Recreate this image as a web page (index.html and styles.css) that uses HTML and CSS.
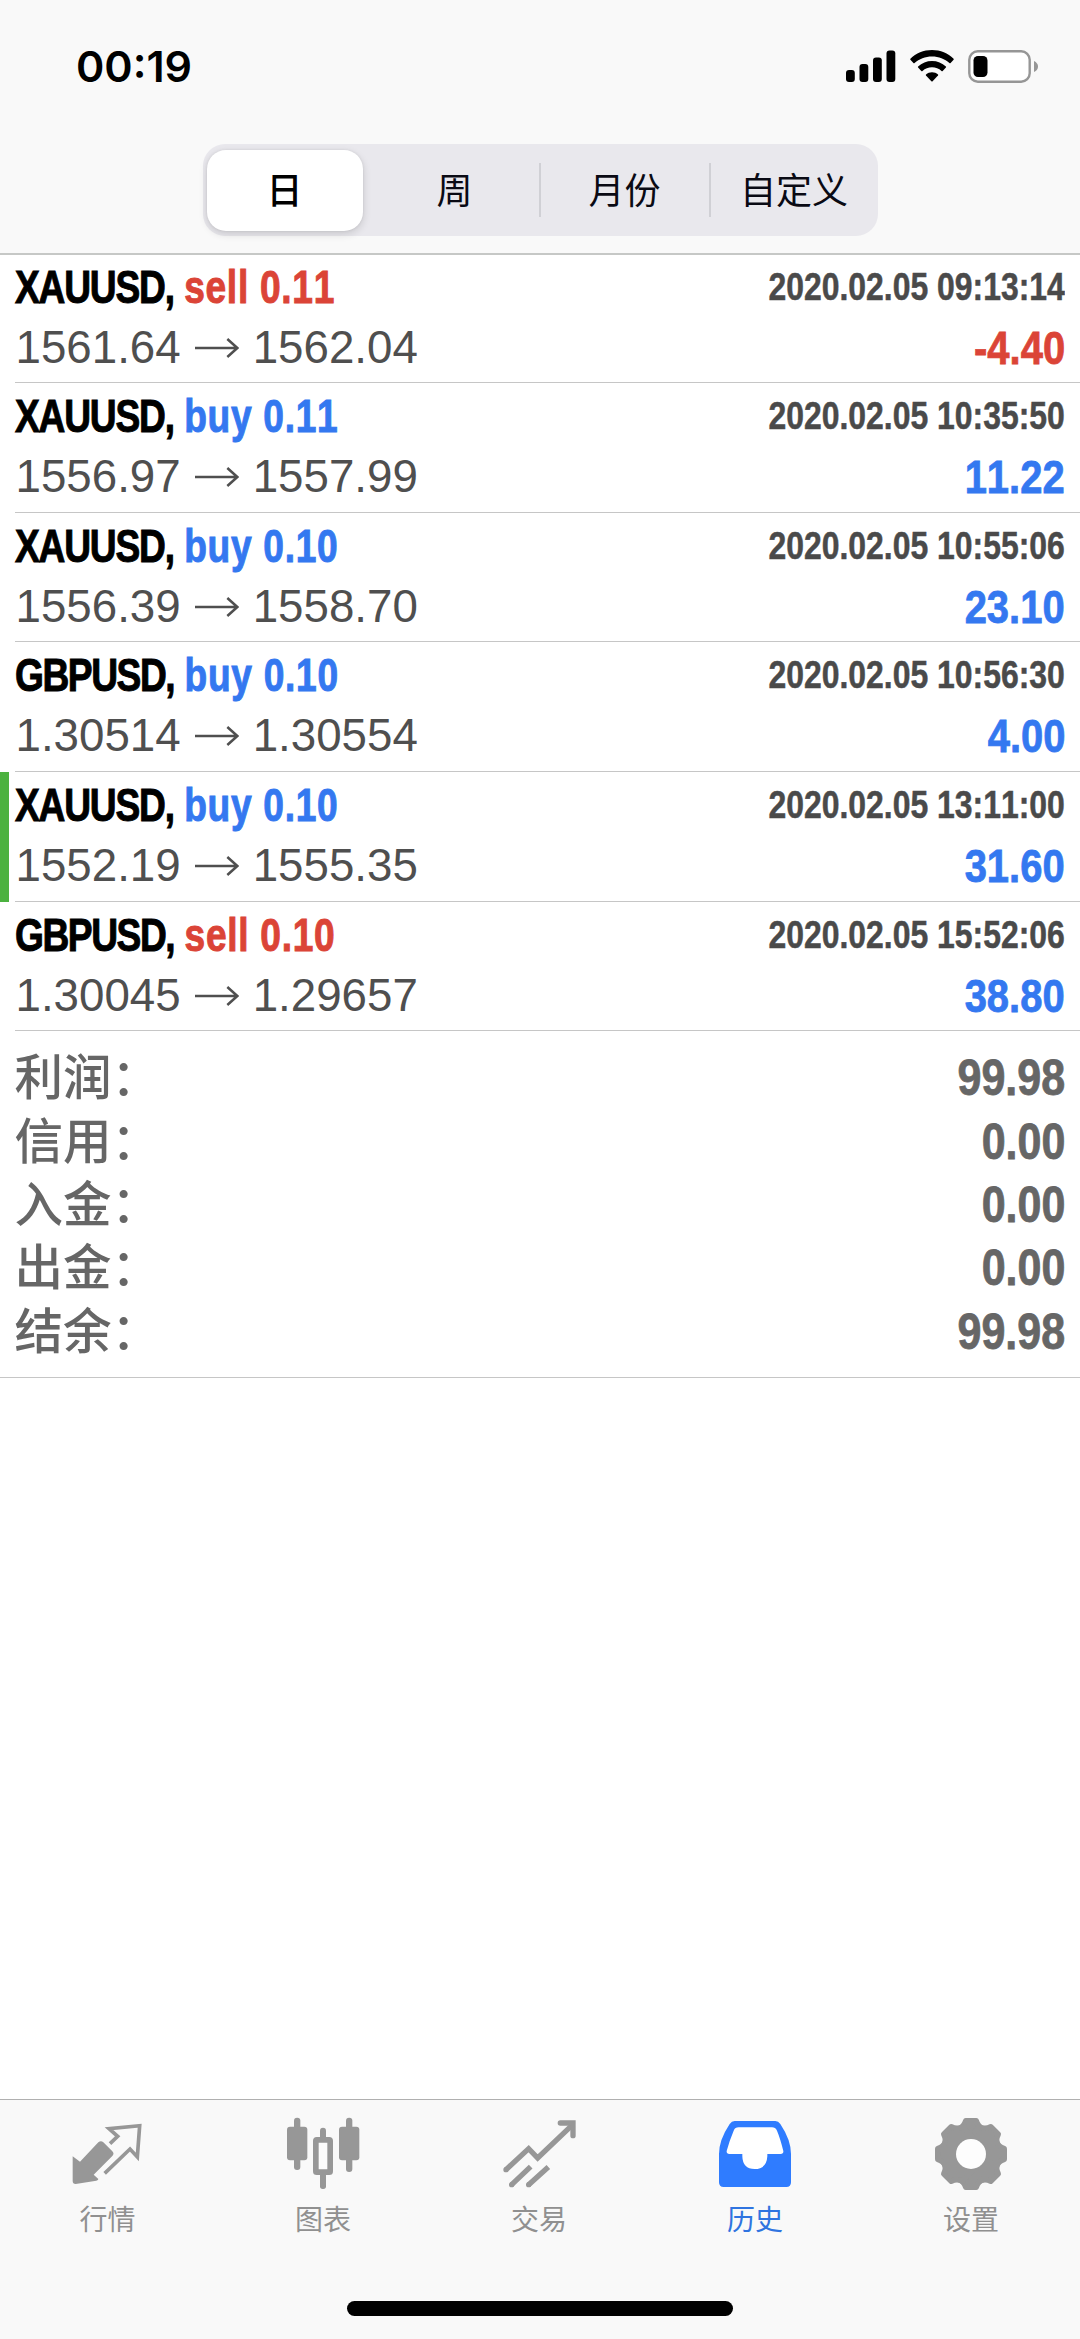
FILE: index.html
```html
<!DOCTYPE html>
<html lang="zh-CN">
<head>
<meta charset="utf-8">
<title>历史</title>
<link rel="stylesheet" href="styles.css">
</head>
<body>
<svg class="defs" aria-hidden="true">
  <symbol id="arrow" viewBox="0 0 132 60">
    <path d="M0 30H126M97 3L127 30L97 57" fill="none" stroke="currentColor" stroke-width="7.5"/>
  </symbol>
</svg>
<div class="screen">
  <header class="top">
    <div class="status">
      <span class="clock">00:19</span>
      <div class="indicators">
        <svg class="signal" viewBox="0 0 50 32">
          <rect x="0" y="20" width="8.8" height="12" rx="3"/>
          <rect x="13.5" y="14" width="8.8" height="18" rx="3"/>
          <rect x="27" y="7.5" width="8.8" height="24.5" rx="3"/>
          <rect x="40.5" y="0.5" width="8.8" height="31.5" rx="3"/>
        </svg>
        <svg class="wifi" viewBox="0 0 44 32">
          <path d="M22 0C30.500 0 38 3.300 43.600 8.800Q44 9.300 43.600 9.800L40.600 13Q40 13.600 39.400 13C34.800 8.800 28.800 6.400 22 6.400S9.200 8.800 4.600 13Q4 13.600 3.400 13L.4 9.800Q0 9.300.4 8.800C6 3.300 13.500 0 22 0Z"/>
          <path d="M22 11C27.300 11 32.200 13 35.900 16.500Q36.400 17 35.900 17.600L32.700 20.900Q32.100 21.500 31.500 20.900C28.900 18.600 25.600 17.300 22 17.300S15.100 18.600 12.500 20.900Q11.900 21.500 11.300 20.900L8.100 17.600Q7.600 17 8.100 16.500C11.800 13 16.700 11 22 11Z"/>
          <path d="M22 22.200C24.300 22.200 26.400 23.100 28 24.500Q28.500 25 28 25.600L22.600 31.200Q22 31.800 21.400 31.200L16 25.600Q15.500 25 16 24.500C17.600 23.100 19.700 22.200 22 22.200Z"/>
        </svg>
        <svg class="battery" viewBox="0 0 71 33">
          <rect x="1.300" y="1.300" width="60.400" height="30.400" rx="8.500" fill="#fff" stroke="#969696" stroke-width="2.400"/>
          <rect x="5.500" y="6" width="14" height="21" rx="4.500"/>
          <path d="M66 11Q70 13 70 16.500T66 22Z" fill="#969696"/>
        </svg>
      </div>
    </div>
    <nav class="segments">
      <span class="segment active">日</span>
      <span class="segment">周</span>
      <span class="segment ruled">月份</span>
      <span class="segment ruled">自定义</span>
    </nav>
  </header>

  <main class="content">
    <section class="deals">
      <article class="deal">
        <div class="line"><span class="title"><b>XAUUSD,</b> <i class="sell">sell 0.11</i></span><time class="date">2020.02.05 09:13:14</time></div>
        <div class="line"><span class="prices">1561.64<svg class="arrow"><use href="#arrow"/></svg>1562.04</span><span class="profit sell">-4.40</span></div>
      </article>
      <article class="deal">
        <div class="line"><span class="title"><b>XAUUSD,</b> <i class="buy">buy 0.11</i></span><time class="date">2020.02.05 10:35:50</time></div>
        <div class="line"><span class="prices">1556.97<svg class="arrow"><use href="#arrow"/></svg>1557.99</span><span class="profit buy">11.22</span></div>
      </article>
      <article class="deal">
        <div class="line"><span class="title"><b>XAUUSD,</b> <i class="buy">buy 0.10</i></span><time class="date">2020.02.05 10:55:06</time></div>
        <div class="line"><span class="prices">1556.39<svg class="arrow"><use href="#arrow"/></svg>1558.70</span><span class="profit buy">23.10</span></div>
      </article>
      <article class="deal">
        <div class="line"><span class="title wide"><b>GBPUSD,</b> <i class="buy">buy 0.10</i></span><time class="date">2020.02.05 10:56:30</time></div>
        <div class="line"><span class="prices">1.30514<svg class="arrow"><use href="#arrow"/></svg>1.30554</span><span class="profit buy">4.00</span></div>
      </article>
      <article class="deal marked">
        <div class="line"><span class="title"><b>XAUUSD,</b> <i class="buy">buy 0.10</i></span><time class="date">2020.02.05 13:11:00</time></div>
        <div class="line"><span class="prices">1552.19<svg class="arrow"><use href="#arrow"/></svg>1555.35</span><span class="profit buy">31.60</span></div>
      </article>
      <article class="deal">
        <div class="line"><span class="title wide"><b>GBPUSD,</b> <i class="sell">sell 0.10</i></span><time class="date">2020.02.05 15:52:06</time></div>
        <div class="line"><span class="prices">1.30045<svg class="arrow"><use href="#arrow"/></svg>1.29657</span><span class="profit buy">38.80</span></div>
      </article>
    </section>
    <dl class="summary">
      <div class="total"><dt>利润：</dt><dd>99.98</dd></div>
      <div class="total"><dt>信用：</dt><dd>0.00</dd></div>
      <div class="total"><dt>入金：</dt><dd>0.00</dd></div>
      <div class="total"><dt>出金：</dt><dd>0.00</dd></div>
      <div class="total"><dt>结余：</dt><dd>99.98</dd></div>
    </dl>
  </main>

  <footer class="bottom">
    <nav class="tabs">
      <a class="tab">
        <svg class="icon" viewBox="212 108 222 222" fill="#979797">
          <path d="M217 229L239 245L294 187Q302 180 309 187L336 214Q343 221 336 228L280 284L294 297Q294 301 288 302L226 312Q217 312 217 303Z"/>
          <path d="M329 191L352 169L326 146L418 137L411 231L389 207L313 280" fill="none" stroke="#979797" stroke-width="11"/>
        </svg>
        <span>行情</span>
      </a>
      <a class="tab">
        <svg class="icon" viewBox="858 108 222 222" fill="#979797">
          <rect x="882" y="113" width="19" height="157" rx="9"/>
          <rect x="861" y="140" width="61" height="101" rx="9"/>
          <rect x="1038" y="113" width="19" height="163" rx="9"/>
          <rect x="1017" y="140" width="61" height="101" rx="9"/>
          <rect x="960" y="143" width="18" height="40" rx="9"/>
          <rect x="960" y="270" width="18" height="57" rx="8"/>
          <rect x="947.500" y="179.500" width="43" height="97" rx="3" fill="#fcfcfc" stroke="#979797" stroke-width="17"/>
        </svg>
        <span>图表</span>
      </a>
      <a class="tab">
        <svg class="icon" viewBox="304 108 222 222" fill="none" stroke="#979797" stroke-width="16">
          <path d="M316 269L384 206L411 234L516 134"/>
          <path d="M479 129H517V167M316 269h.1M333 314h.1M384 314h.1" stroke-linecap="round"/>
          <path d="M333 314L390 260M384 314L443 261"/>
        </svg>
        <span>交易</span>
      </a>
      <a class="tab selected">
        <svg class="icon" viewBox="114 108 222 222">
          <path d="M164 123H286Q295 123 301 132Q333 180 333 222V307Q333 321 319 321H131Q117 321 117 307V222Q117 180 149 132Q155 123 164 123Z" fill="#2f7cff"/>
          <path d="M176 142H276Q286 142 291 152Q301 176 310 213Q311 222 302 222H262V229Q260 267 224 267T187 229V222H148Q139 222 140 213Q149 180 161 152Q165 142 176 142Z" fill="#fff"/>
        </svg>
        <span>历史</span>
      </a>
      <a class="tab">
        <svg class="icon" viewBox="762 108 222 222" fill="#979797" stroke="#979797">
          <g stroke-width="16" stroke-linejoin="round">
            <path id="tooth" d="M857 122H889Q895 142 913 146V222H833V146Q851 142 857 122Z"/>
            <use href="#tooth" transform="rotate(45 873 222)"/>
            <use href="#tooth" transform="rotate(90 873 222)"/>
            <use href="#tooth" transform="rotate(135 873 222)"/>
            <use href="#tooth" transform="rotate(180 873 222)"/>
            <use href="#tooth" transform="rotate(225 873 222)"/>
            <use href="#tooth" transform="rotate(270 873 222)"/>
            <use href="#tooth" transform="rotate(315 873 222)"/>
          </g>
          <circle cx="873" cy="222" r="45" fill="#fdfdfd" stroke="none"/>
        </svg>
        <span>设置</span>
      </a>
    </nav>
    <div class="home"></div>
  </footer>
</div>
</body>
</html>
```
FILE: styles.css
```css
* { box-sizing: border-box; }

body {
  margin: 0;
  background: #fff;
  font-family: "Liberation Sans", "Noto Sans CJK SC", sans-serif;
}

.defs { display: none; }

.screen {
  display: flex;
  flex-direction: column;
  width: 1080px;
  height: 2339px;
  overflow: hidden;
}

/* Status bar and period switch */
.top {
  display: flex;
  flex-direction: column;
  align-items: center;
  flex: none;
  height: 255px;
  background: #f9f9f9;
  border-bottom: 2px solid #c6c8c6;
}

.status {
  display: flex;
  justify-content: space-between;
  align-items: center;
  width: 100%;
  height: 132px;
  padding: 0 41px 0 76px;
  margin-bottom: 12px;
}

.clock {
  font: 600 43px/50px Inter, sans-serif;
}

.indicators { display: flex; align-items: center; }
.signal { width: 50px; height: 32px; margin-right: 14px; }
.wifi { width: 44px; height: 32px; margin-right: 14px; }
.battery { width: 71px; height: 33px; }

.segments {
  display: grid;
  grid-template-columns: 168px 168px 170px 169px;
  align-items: center;
  width: 675px;
  height: 92px;
  background: #e9e8ed;
  border-radius: 22px;
}

.segment {
  display: flex;
  align-items: center;
  justify-content: center;
  height: 54px;
  padding-bottom: 3px;
  color: #0a0a14;
  font: 400 36px/51px "Noto Sans CJK SC", sans-serif;
}

.segment.ruled { border-left: 2px solid #d0d0d5; }

.segment.active {
  height: 81px;
  margin: 0 8px 0 4px;
  background: #fff;
  color: #000;
  font-weight: 500;
  border-radius: 19px;
  box-shadow: 0 3px 8px rgba(0, 0, 0, 0.14), 0 0 3px rgba(0, 0, 0, 0.08);
}

/* Closed deals */
.content { flex: 1; }

.deal {
  height: 129.650px;
  margin-left: 14.500px;
  padding: 5px 15px 0 0;
  border-bottom: 1px solid #c6c6c6;
}

.deal:first-child { height: 128px; padding-top: 4px; }

.deal.marked {
  margin-left: 0;
  padding-left: 14.500px;
  border-bottom-color: transparent;
  background:
    linear-gradient(#4cb23f, #4cb23f) 0 0 / 9px 100% no-repeat border-box,
    linear-gradient(#c6c6c6, #c6c6c6) 14.500px 100% / 100% 1px no-repeat border-box;
}

.line {
  display: flex;
  justify-content: space-between;
  align-items: flex-start;
}

.title, .date, .profit, dd {
  font-weight: 700;
  font-kerning: none;
  white-space: nowrap;
}

.title {
  font-size: 47px;
  line-height: 56px;
  transform: scaleX(0.79);
  transform-origin: 0 50%;
  -webkit-text-stroke: 1px;
}

.title b { letter-spacing: -1.500px; }
.title.wide b { letter-spacing: -1.800px; }
.title i { font-style: normal; letter-spacing: 0.900px; }

.date {
  color: #4a4a4a;
  font-size: 38px;
  line-height: 56px;
  transform: scaleX(0.84);
  transform-origin: 100% 50%;
  -webkit-text-stroke: 0.500px;
}

.prices {
  display: flex;
  align-items: center;
  padding-left: 1px;
  color: #4f4f4f;
  font-size: 45.700px;
  line-height: 66px;
  font-kerning: none;
}

.arrow { width: 44px; height: 20px; margin: 0 14px; }

.profit {
  font-size: 47px;
  line-height: 66px;
  transform: scaleX(0.85);
  transform-origin: 100% 50%;
  -webkit-text-stroke: 0.800px;
}

.buy { color: #3478f0; }
.sell { color: #db4437; }

/* Account totals */
.summary {
  height: 346.700px;
  margin: 0;
  padding: 16px 15px 0 14.500px;
  border-bottom: 1px solid #c6c6c6;
}

.total {
  display: flex;
  justify-content: space-between;
  height: 63.400px;
  color: #666;
}

dt {
  font: 500 48.500px/55px "Noto Sans CJK SC", sans-serif;
}

dd {
  margin: 0;
  font-size: 50px;
  line-height: 63.400px;
  transform: scaleX(0.86);
  transform-origin: 100% 50%;
  -webkit-text-stroke: 0.800px;
}

/* Tab bar */
.bottom {
  display: flex;
  flex-direction: column;
  align-items: center;
  flex: none;
  height: 240px;
  background: #f9f9f9;
  border-top: 1px solid #b0b0b0;
}

.tabs {
  display: grid;
  grid-template-columns: 215px repeat(4, 216px);
  width: 100%;
  height: 201px;
  padding-top: 16px;
}

.tab {
  display: flex;
  flex-direction: column;
  align-items: center;
  color: #909090;
  font: 400 28px/40px "Noto Sans CJK SC", sans-serif;
}

.tab.selected { color: #2f74e0; }
.icon { width: 74px; height: 74px; margin-bottom: 8px; }

.home {
  width: 386px;
  height: 15px;
  background: #000;
  border-radius: 8px;
}
```
